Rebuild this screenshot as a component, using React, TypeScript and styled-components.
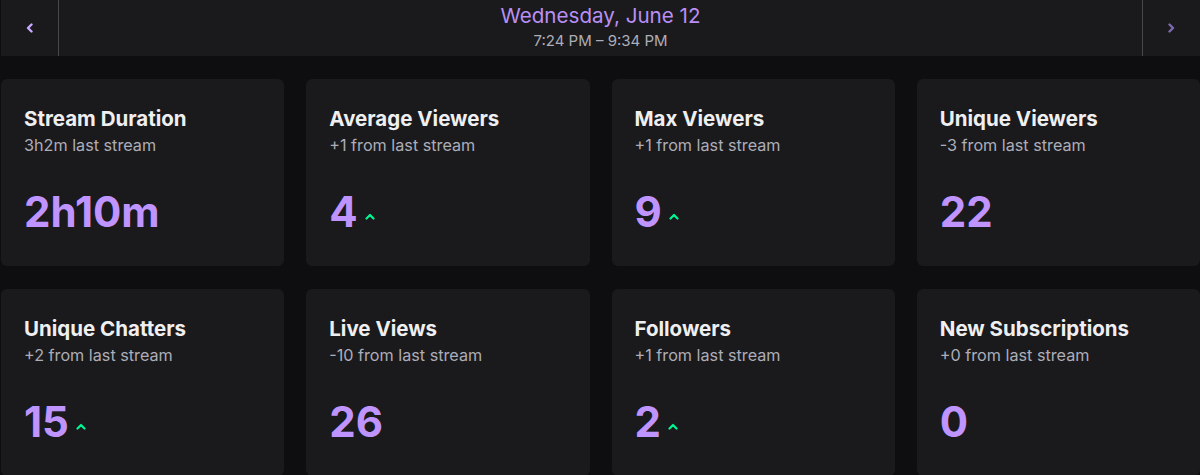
import * as React from "react";
import styled, { createGlobalStyle } from "styled-components";

type Stat = {
  title: string;
  note: string;
  value: string;
  up?: boolean;
};

const stats: Stat[] = [
  { title: "Stream Duration", note: "3h2m last stream", value: "2h10m" },
  { title: "Average Viewers", note: "+1 from last stream", value: "4", up: true },
  { title: "Max Viewers", note: "+1 from last stream", value: "9", up: true },
  { title: "Unique Viewers", note: "-3 from last stream", value: "22" },
  { title: "Unique Chatters", note: "+2 from last stream", value: "15", up: true },
  { title: "Live Views", note: "-10 from last stream", value: "26" },
  { title: "Followers", note: "+1 from last stream", value: "2", up: true },
  { title: "New Subscriptions", note: "+0 from last stream", value: "0" },
];

const GlobalStyle = createGlobalStyle`
  body {
    margin: 0;
    background: #0e0e10;
    font-family: Inter, "Noto Sans", sans-serif;
    -webkit-font-smoothing: antialiased;
  }
`;

const Page = styled.div`
  padding-left: 1px;
  height: 475px;
  overflow: hidden;
`;

const Header = styled.div`
  display: flex;
  height: 56px;
  background: #1a1a1c;
`;

const NavButton = styled.button<{ $side: "left" | "right"; $dim?: boolean }>`
  width: 58px;
  flex: none;
  display: flex;
  align-items: center;
  justify-content: center;
  background: transparent;
  border: none;
  padding: 0;
  ${(p) =>
    p.$side === "left"
      ? "border-right: 1px solid #48484c;"
      : "border-left: 1px solid #48484c;"}
  color: ${(p) => (p.$dim ? "#7d68b0" : "#c9a8ff")};
  cursor: pointer;
`;

const DateBlock = styled.div`
  flex: 1;
  display: flex;
  flex-direction: column;
  align-items: center;
  padding-top: 4px;
`;

const DateTitle = styled.div`
  font-size: 20.6px;
  line-height: 24px;
  color: #b98ff5;
`;

const TimeRange = styled.div`
  margin-top: 3px;
  font-size: 15px;
  line-height: 20px;
  color: #adadb8;
`;

const Grid = styled.div`
  display: grid;
  grid-template-columns: repeat(4, 1fr);
  column-gap: 22px;
  row-gap: 23px;
  margin-top: 23px;
`;

const Card = styled.div`
  background: #1a1a1c;
  border-radius: 6px;
  padding: 28px 23px 29px;
  display: flex;
  flex-direction: column;
`;

const Title = styled.div`
  font-size: 20.5px;
  line-height: 24px;
  font-weight: 650;
  color: #efeff1;
`;

const Note = styled.div`
  margin-top: 2px;
  font-size: 16.2px;
  line-height: 24px;
  color: #adadb8;
`;

const ValueRow = styled.div`
  margin-top: 29px;
  display: flex;
  align-items: center;
  gap: 7px;
  height: 51px;
`;

const Value = styled.span`
  font-size: 42px;
  font-weight: 700;
  color: #bf94ff;
  line-height: 51px;
`;

const UpMark = styled.svg`
  margin-top: 9px;
  color: #00f593;
`;

function Chevron({ dir }: { dir: "left" | "right" }) {
  return (
    <svg width="7" height="10" viewBox="0 0 7 10" fill="none">
      <path
        d={dir === "left" ? "M5.5 1.5 2 5l3.5 3.5" : "M1.5 1.5 5 5 1.5 8.5"}
        stroke="currentColor"
        strokeWidth="2.4"
        strokeLinecap="round"
        strokeLinejoin="round"
      />
    </svg>
  );
}

function StatCard({ stat }: { stat: Stat }) {
  return (
    <Card>
      <Title>{stat.title}</Title>
      <Note>{stat.note}</Note>
      <ValueRow>
        <Value>{stat.value}</Value>
        {stat.up && (
          <UpMark width="10" height="7" viewBox="0 0 10 7" fill="none">
            <path
              d="M1.5 5.5 5 2l3.5 3.5"
              stroke="currentColor"
              strokeWidth="2.2"
              strokeLinecap="round"
              strokeLinejoin="round"
            />
          </UpMark>
        )}
      </ValueRow>
    </Card>
  );
}

export default function App() {
  return (
    <Page>
      <GlobalStyle />
      <Header>
        <NavButton $side="left" aria-label="Previous stream">
          <Chevron dir="left" />
        </NavButton>
        <DateBlock>
          <DateTitle>Wednesday, June 12</DateTitle>
          <TimeRange>7:24 PM – 9:34 PM</TimeRange>
        </DateBlock>
        <NavButton $side="right" $dim aria-label="Next stream">
          <Chevron dir="right" />
        </NavButton>
      </Header>
      <Grid>
        {stats.map((s) => (
          <StatCard key={s.title} stat={s} />
        ))}
      </Grid>
    </Page>
  );
}
